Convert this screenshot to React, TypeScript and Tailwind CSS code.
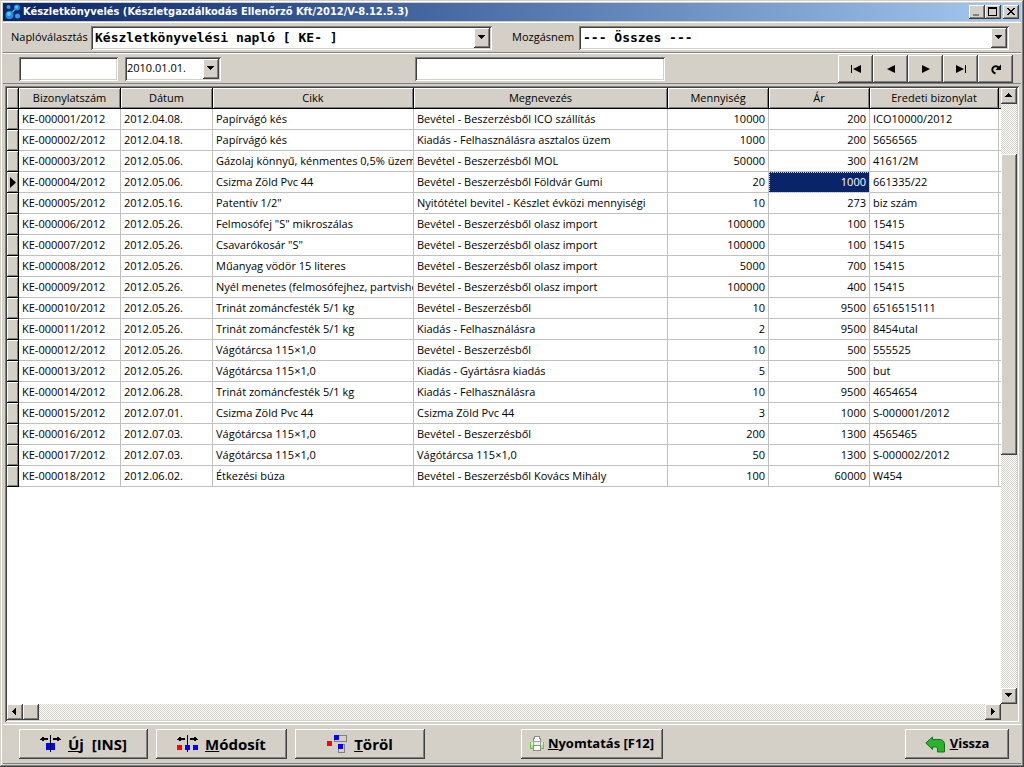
import React from 'react';

const raised =
  'bg-[#d4d0c8] shadow-[inset_-1px_-1px_0_#404040,inset_1px_1px_0_#ffffff,inset_-2px_-2px_0_#808080]';
const sunken =
  'shadow-[inset_1px_1px_0_#808080,inset_-1px_-1px_0_#ffffff,inset_2px_2px_0_#404040,inset_-2px_-2px_0_#d4d0c8]';
const dither = 'bg-[repeating-conic-gradient(#d4d0c8_0_25%,#ffffff_0_50%)] bg-[length:2px_2px]';

type Row = [string, string, string, string, string, string, string];

const rows: Row[] = [
  ['KE-000001/2012', '2012.04.08.', 'Papírvágó kés', 'Bevétel - Beszerzésből ICO szállítás', '10000', '200', 'ICO10000/2012'],
  ['KE-000002/2012', '2012.04.18.', 'Papírvágó kés', 'Kiadás - Felhasználásra asztalos üzem', '1000', '200', '5656565'],
  ['KE-000003/2012', '2012.05.06.', 'Gázolaj könnyű, kénmentes 0,5% üzema', 'Bevétel - Beszerzésből MOL', '50000', '300', '4161/2M'],
  ['KE-000004/2012', '2012.05.06.', 'Csizma Zöld Pvc 44', 'Bevétel - Beszerzésből Földvár Gumi', '20', '1000', '661335/22'],
  ['KE-000005/2012', '2012.05.16.', 'Patentív 1/2"', 'Nyitótétel bevitel - Készlet évközi mennyiségi', '10', '273', 'biz szám'],
  ['KE-000006/2012', '2012.05.26.', 'Felmosófej "S" mikroszálas', 'Bevétel - Beszerzésből olasz import', '100000', '100', '15415'],
  ['KE-000007/2012', '2012.05.26.', 'Csavarókosár "S"', 'Bevétel - Beszerzésből olasz import', '100000', '100', '15415'],
  ['KE-000008/2012', '2012.05.26.', 'Műanyag vödör 15 literes', 'Bevétel - Beszerzésből olasz import', '5000', '700', '15415'],
  ['KE-000009/2012', '2012.05.26.', 'Nyél menetes (felmosófejhez, partvisho', 'Bevétel - Beszerzésből olasz import', '100000', '400', '15415'],
  ['KE-000010/2012', '2012.05.26.', 'Trinát zománcfesték 5/1 kg', 'Bevétel - Beszerzésből', '10', '9500', '6516515111'],
  ['KE-000011/2012', '2012.05.26.', 'Trinát zománcfesték 5/1 kg', 'Kiadás - Felhasználásra', '2', '9500', '8454utal'],
  ['KE-000012/2012', '2012.05.26.', 'Vágótárcsa 115×1,0', 'Bevétel - Beszerzésből', '10', '500', '555525'],
  ['KE-000013/2012', '2012.05.26.', 'Vágótárcsa 115×1,0', 'Kiadás - Gyártásra kiadás', '5', '500', 'but'],
  ['KE-000014/2012', '2012.06.28.', 'Trinát zománcfesték 5/1 kg', 'Kiadás - Felhasználásra', '10', '9500', '4654654'],
  ['KE-000015/2012', '2012.07.01.', 'Csizma Zöld Pvc 44', 'Csizma Zöld Pvc 44', '3', '1000', 'S-000001/2012'],
  ['KE-000016/2012', '2012.07.03.', 'Vágótárcsa 115×1,0', 'Bevétel - Beszerzésből', '200', '1300', '4565465'],
  ['KE-000017/2012', '2012.07.03.', 'Vágótárcsa 115×1,0', 'Vágótárcsa 115×1,0', '50', '1300', 'S-000002/2012'],
  ['KE-000018/2012', '2012.06.02.', 'Étkezési búza', 'Bevétel - Beszerzésből Kovács Mihály', '100', '60000', 'W454'],
];

const headers = ['Bizonylatszám', 'Dátum', 'Cikk', 'Megnevezés', 'Mennyiség', 'Ár', 'Eredeti bizonylat'];
const selectedRow = 3;

function Arrow({ dir }: { dir: 'up' | 'down' | 'left' | 'right' }) {
  const d = {
    up: 'M3 1h1v1h1v1h1v1h1v1H0V4h1V3h1V2h1z',
    down: 'M0 1h7v1H6v1H5v1H4v1H3V4H2V3H1V2H0z',
    left: 'M5 0v7H4V6H3V5H2V4H1V3h1V2h1V1h1V0z',
    right: 'M2 0v7h1V6h1V5h1V4h1V3H5V2H4V1H3V0z',
  }[dir];
  return (
    <svg width="7" height="7" viewBox="0 0 7 7" shapeRendering="crispEdges" aria-hidden="true">
      <path d={d} />
    </svg>
  );
}

function ScrollButton({ dir, label }: { dir: 'up' | 'down' | 'left' | 'right'; label: string }) {
  return (
    <button aria-label={label} className={`flex size-4 shrink-0 items-center justify-center pr-px pb-px ${raised}`}>
      <Arrow dir={dir} />
    </button>
  );
}

function Combo({ id, value, className }: { id: string; value: string; className: string }) {
  return (
    <div className={`relative h-6 ${className}`}>
      <select
        id={id}
        className={`h-6 w-full appearance-none bg-white pr-5 pl-1 font-['DejaVu_Sans_Mono',monospace] text-[13px] font-bold outline-none ${sunken}`}
      >
        <option>{value}</option>
      </select>
      <span className={`pointer-events-none absolute top-0.5 right-0.5 bottom-0.5 flex w-4 items-center justify-center pr-px pb-px ${raised}`}>
        <Arrow dir="down" />
      </span>
    </div>
  );
}

function NavButton({ label, children }: { label: string; children: React.ReactNode }) {
  return (
    <button aria-label={label} className={`flex h-7 w-[35px] items-center justify-center ${raised}`}>
      <svg width="14" height="12" viewBox="0 0 14 12" aria-hidden="true">
        {children}
      </svg>
    </button>
  );
}

function TitleButton({ label, children }: { label: string; children: React.ReactNode }) {
  return (
    <button aria-label={label} className={`h-[14px] w-4 ${raised}`}>
      <svg width="16" height="14" viewBox="0 0 16 14" shapeRendering="crispEdges" aria-hidden="true">
        {children}
      </svg>
    </button>
  );
}

function ActionButton({ className, children }: { className: string; children: React.ReactNode }) {
  return (
    <button className={`flex h-[30px] items-center justify-center font-bold whitespace-pre ${raised} ${className}`}>
      {children}
    </button>
  );
}

function NewIcon() {
  return (
    <svg width="22" height="18" viewBox="0 0 22 18" shapeRendering="crispEdges" aria-hidden="true">
      <path fill="#0000ff" d="M6 8h9v7H6z" />
      <path d="M10 0h1v17h-1zM0 4h1V3h1V2h2v1h4v2H4v1H2V5H0zM21 4h-1V3h-1V2h-2v1h-4v2h4v1h2V5h2z" />
    </svg>
  );
}

function EditIcon() {
  return (
    <svg width="22" height="18" viewBox="0 0 22 18" shapeRendering="crispEdges" aria-hidden="true">
      <path fill="#ff0000" d="M0 10h5v5H0z" />
      <path fill="#0000ff" d="M8 10h5v5H8zM16 10h5v5h-5z" />
      <path d="M10 0h1v17h-1zM0 4h1V3h1V2h2v1h4v2H4v1H2V5H0zM21 4h-1V3h-1V2h-2v1h-4v2h4v1h2V5h2z" />
    </svg>
  );
}

function DeleteIcon() {
  return (
    <svg width="21" height="18" viewBox="0 0 21 18" shapeRendering="crispEdges" aria-hidden="true">
      <path fill="none" stroke="#808080" d="M7.5.5h12v6h-12zM11.5 9.5h6v8h-6z" />
      <path fill="#ff0000" d="M0 6h5v5H0z" />
      <path fill="#0000ff" d="M7 0h5v5H7zM11 9h5v5h-5z" />
    </svg>
  );
}

function PrinterIcon() {
  return (
    <svg width="14" height="16" viewBox="0 0 14 16" shapeRendering="crispEdges" aria-hidden="true">
      <path fill="#a8e58a" d="M1 5h12v8H1z" />
      <path fill="#6cc644" d="M0 6h1v7H0zM13 6h1v7h-1zM1 12h2v1H1zM11 12h2v1h-2z" />
      <path fill="#d6f5c6" d="M1 6h2v3H1zM11 6h2v3h-2z" />
      <path fill="#fff" stroke="#8c8c8c" d="M3.500 5.500v-3h1v-2h5v2h1v3z" />
      <path fill="#f0f0f0" stroke="#a0a0a0" d="M3.500 5.500h7v4h-7z" />
      <path fill="#fff" stroke="#8c8c8c" d="M3.500 9.500h7v5h-7z" />
    </svg>
  );
}

function BackIcon() {
  return (
    <svg width="21" height="17" viewBox="0 0 21 17" aria-hidden="true">
      <path fill="#2bb32b" stroke="#12701a" d="M.8 7 7.500 1v2.500h6.500c4 0 5.500 2 5.500 5.500v7h-7v-3c0-1.500-.8-2-2-2h-3V13.500z" />
    </svg>
  );
}

export default function App() {
  return (
    <div className="flex h-screen flex-col overflow-hidden bg-[#d4d0c8] p-[3px] font-['Open_Sans','Noto_Sans',sans-serif] text-[11px] text-black shadow-[inset_-1px_-1px_0_#404040,inset_1px_1px_0_#d4d0c8,inset_-2px_-2px_0_#808080,inset_2px_2px_0_#ffffff]">
      <header className="flex h-[18px] shrink-0 items-center bg-linear-to-r from-[#0a246a] to-[#a6caf0] px-0.5">
        <svg width="16" height="16" viewBox="0 0 16 16" aria-hidden="true">
          <path stroke="#49c0f5" strokeWidth="1.500" d="M4.500 11 11.500 4" />
          <circle cx="4.500" cy="11" r="4" fill="#1c8fe0" />
          <circle cx="4" cy="10" r="2" fill="#5cc8f8" />
          <circle cx="12" cy="3.500" r="3" fill="#1c8fe0" />
          <circle cx="11.500" cy="3" r="1.500" fill="#5cc8f8" />
          <circle cx="12.500" cy="12" r="2.500" fill="#2a9fea" />
          <circle cx="3.500" cy="3" r="2" fill="#2a9fea" />
        </svg>
        <h1 className="ml-0.5 flex-1 truncate font-['DejaVu_Sans_Condensed','DejaVu_Sans',sans-serif] text-[11px] font-bold text-white">
          Készletkönyvelés (Készletgazdálkodás Ellenőrző Kft/2012/V-8.12.5.3)
        </h1>
        <div className="flex">
          <TitleButton label="Kis méret">
            <path d="M4 9h6v2H4z" fill="#808080" />
          </TitleButton>
          <TitleButton label="Teljes méret">
            <path d="M3 2h9v9H3zM4 4v6h7V4z" fillRule="evenodd" />
          </TitleButton>
        </div>
        <div className="ml-0.5 flex">
          <TitleButton label="Bezárás">
            <path d="M4 3h2v1h1v1h2V4h1V3h2v1h-1v1h-1v1H9v1h1v1h1v1h1v1h-2V9H9V8H7v1H6v1H4V9h1V8h1V7h1V6H6V5H5V4H4z" />
          </TitleButton>
        </div>
      </header>

      <section className="mt-px flex h-[31px] shrink-0 items-center border-t border-b border-t-white border-b-[#808080] pr-3 pl-2">
        <label htmlFor="naplo" className="w-20 whitespace-nowrap">Naplóválasztás</label>
        <Combo id="naplo" value="Készletkönyvelési napló [ KE- ]" className="w-[401px]" />
        <label htmlFor="mozgas" className="ml-5 w-[67px]">Mozgásnem</label>
        <Combo id="mozgas" value="--- Összes ---" className="flex-1" />
      </section>

      <section className="flex h-[31px] shrink-0 items-center border-t border-b border-t-white border-b-[#808080] pr-2 pl-4">
        <input aria-label="Bizonylatszám" className={`h-6 w-[99px] bg-white px-1 outline-none ${sunken}`} />
        <div className={`ml-[7px] flex h-6 w-24 bg-white p-0.5 ${sunken}`}>
          <input aria-label="Dátum" defaultValue="2010.01.01." className="w-0 flex-1 bg-transparent outline-none" />
          <button aria-label="Naptár" className={`flex w-4 items-center justify-center pr-px pb-px ${raised}`}>
            <Arrow dir="down" />
          </button>
        </div>
        <input aria-label="Megnevezés" className={`ml-[194px] h-6 w-[250px] bg-white px-1 outline-none ${sunken}`} />
        <nav className="ml-auto flex">
          <NavButton label="Első">
            <path d="M2 2h1v8H2zM12 2v8L4 6z" />
          </NavButton>
          <NavButton label="Előző">
            <path d="M11 2v8L3 6z" />
          </NavButton>
          <NavButton label="Következő">
            <path d="M3 2v8l8-4z" />
          </NavButton>
          <NavButton label="Utolsó">
            <path d="M2 2v8l8-4zM11 2h1v8h-1z" />
          </NavButton>
          <NavButton label="Frissítés">
            <path d="M6.500 10.500C3.500 9.500 2.500 7 3.800 4.800 5.200 2.700 8.200 2.600 9.800 4.500" fill="none" stroke="#000" strokeWidth="2" />
            <path d="M12 1.500V7H6.500z" />
          </NavButton>
        </nav>
      </section>

      <main className={`mx-0.5 mt-0.5 flex min-h-0 flex-1 flex-col bg-white p-0.5 ${sunken}`}>
        <div className="flex min-h-0 flex-1">
          <div className="min-w-0 flex-1 overflow-hidden">
            <table className="w-full table-fixed border-separate border-spacing-0">
              <colgroup>
                <col className="w-3" />
                <col className="w-[102px]" />
                <col className="w-[92px]" />
                <col className="w-[201px]" />
                <col />
                <col className="w-[101px]" />
                <col className="w-[101px]" />
                <col className="w-[129px]" />
                <col className="w-0.5" />
              </colgroup>
              <thead>
                <tr className="h-[21px]">
                  <th className="border-r border-b border-black bg-[#d4d0c8] p-0 shadow-[inset_1px_1px_0_#fff,inset_-1px_-1px_0_#808080]" />
                  {headers.map((h) => (
                    <th
                      key={h}
                      className="border-r border-b border-black bg-[#d4d0c8] p-0 leading-5 font-medium shadow-[inset_1px_1px_0_#fff,inset_-1px_-1px_0_#808080]"
                    >
                      {h}
                    </th>
                  ))}
                  <th className="border-b border-black bg-[#d4d0c8] p-0" />
                </tr>
              </thead>
              <tbody>
                {rows.map((row, r) => (
                  <tr key={row[0]} className="h-[21px]">
                    <td className="border-r border-b border-black bg-[#d4d0c8] p-0 shadow-[inset_1px_1px_0_#fff,inset_-1px_-1px_0_#808080]">
                      {r === selectedRow && (
                        <svg width="11" height="11" viewBox="0 0 11 11" className="block" aria-hidden="true">
                          <path d="M3 0v11l6-5.500z" />
                        </svg>
                      )}
                    </td>
                    {row.map((cell, c) => (
                      <td
                        key={c}
                        className={`overflow-hidden border-r border-b border-[#c0c0c0] py-0 pl-[3px] leading-5 whitespace-nowrap ${
                          c === 4 || c === 5 ? 'pr-[3px] text-right' : ''
                        } ${r === selectedRow && c === 5 ? 'bg-[#0a246a] text-white outline-1 -outline-offset-1 outline-[#f5db95] outline-dotted' : ''}`}
                      >
                        {cell}
                      </td>
                    ))}
                    <td className="border-b border-[#c0c0c0] p-0" />
                  </tr>
                ))}
              </tbody>
            </table>
          </div>
          <div className={`flex w-4 shrink-0 flex-col ${dither}`}>
            <ScrollButton dir="up" label="Fel" />
            <div className="flex-[50]" />
            <div className={`flex-[302] ${raised}`} />
            <div className="flex-[234]" />
            <ScrollButton dir="down" label="Le" />
          </div>
        </div>
        <div className="flex h-4 shrink-0 bg-[#d4d0c8]">
          <div className={`flex flex-1 ${dither}`}>
            <ScrollButton dir="left" label="Balra" />
            <div className={`w-4 ${raised}`} />
            <div className="flex-1" />
            <ScrollButton dir="right" label="Jobbra" />
          </div>
          <div className="w-4" />
        </div>
      </main>

      <footer className="mt-0.5 flex h-10 shrink-0 items-center border-t border-b border-t-white border-b-[#808080] pr-3 pl-4 text-[15px]">
        <ActionButton className="w-[129px] gap-1.5">
          <NewIcon />
          <span><u>Ú</u>j  [INS]</span>
        </ActionButton>
        <ActionButton className="ml-2 w-[131px] gap-1.5">
          <EditIcon />
          <span><u>M</u>ódosít</span>
        </ActionButton>
        <ActionButton className="ml-2 w-[130px] gap-1.5">
          <DeleteIcon />
          <span><u>T</u>öröl</span>
        </ActionButton>
        <ActionButton className="ml-24 w-[142px] gap-1 text-[13px]">
          <PrinterIcon />
          <span><u>N</u>yomtatás [F12]</span>
        </ActionButton>
        <ActionButton className="ml-auto w-[104px] gap-1 text-[13px]">
          <BackIcon />
          <span><u>V</u>issza</span>
        </ActionButton>
      </footer>
    </div>
  );
}
